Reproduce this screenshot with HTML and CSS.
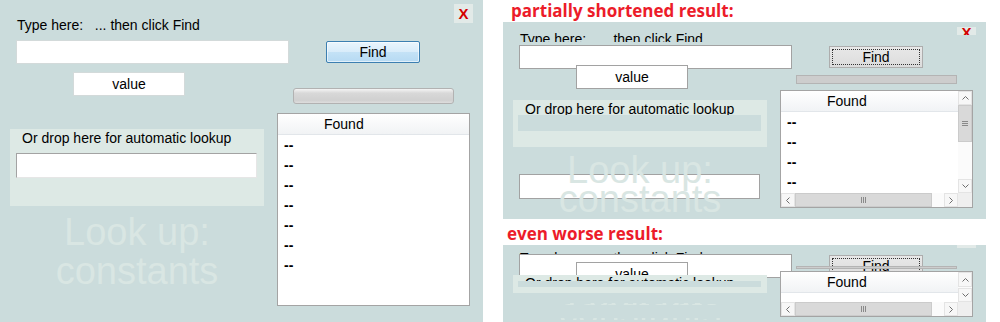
FILE: index.html
```html
<!DOCTYPE html>
<html>
<head>
<meta charset="utf-8">
<title>Look up: constants</title>
<link rel="stylesheet" href="styles.css">
</head>
<body>
<div class="page">

	<!-- normal layout -->
	<div class="panel full">
		<div class="col-left">
			<div class="caption">Type here:&nbsp;&nbsp; ... then click Find</div>
			<div class="field query"></div>
			<div class="field value">value</div>
			<div class="drop">
				<div class="drop-label">Or drop here for automatic lookup</div>
				<div class="drop-band"></div>
				<div class="field drop-field"></div>
			</div>
			<div class="ghost">Look up:<br>constants</div>
		</div>
		<div class="col-right">
			<div class="close">X</div>
			<div class="btn">Find</div>
			<div class="progress"></div>
			<div class="list">
				<div class="list-body">
					<div class="list-head">Found</div>
					<div class="row">--</div>
					<div class="row">--</div>
					<div class="row">--</div>
					<div class="row">--</div>
					<div class="row">--</div>
					<div class="row">--</div>
					<div class="row">--</div>
				</div>
			</div>
		</div>
	</div>

	<div class="results">
		<h2>partially shortened result:</h2>
		<div class="panel broken short">
			<div class="col-left">
				<div class="caption">Type here:&nbsp;&nbsp; ... then click Find</div>
				<div class="field query"></div>
				<div class="field value">value</div>
				<div class="drop">
					<div class="drop-label">Or drop here for automatic lookup</div>
					<div class="drop-band"></div>
					<div class="field drop-field"></div>
				</div>
				<div class="ghost">Look up:<br>constants</div>
			</div>
			<div class="col-right">
				<div class="close">X</div>
				<div class="btn">Find</div>
				<div class="progress"></div>
				<div class="list scroll">
					<div class="list-body">
						<div class="list-head">Found</div>
						<div class="row">--</div>
						<div class="row">--</div>
						<div class="row">--</div>
						<div class="row">--</div>
						<div class="row">--</div>
						<div class="row">--</div>
						<div class="row">--</div>
					</div>
					<div class="vscroll">
						<div class="sb-btn"><svg width="7" height="4"><polyline points="0.5,3.5 3.5,0.5 6.5,3.5" fill="none" stroke="#6d6d6d"/></svg></div>
						<div class="vthumb"><svg width="6" height="5"><path d="M0 0.5H6M0 2.5H6M0 4.5H6" stroke="#8a8a8a"/></svg></div>
						<div class="vtrack"></div>
						<div class="sb-btn"><svg width="7" height="4"><polyline points="0.5,0.5 3.5,3.5 6.5,0.5" fill="none" stroke="#6d6d6d"/></svg></div>
					</div>
					<div class="hscroll">
						<div class="sb-btn"><svg width="4" height="7"><polyline points="3.5,0.5 0.5,3.5 3.5,6.5" fill="none" stroke="#6d6d6d"/></svg></div>
						<div class="hthumb"><svg width="5" height="6"><path d="M0.5 0V6M2.5 0V6M4.5 0V6" stroke="#8a8a8a"/></svg></div>
						<div class="htrack"></div>
						<div class="sb-btn"><svg width="4" height="7"><polyline points="0.5,0.5 3.5,3.5 0.5,6.5" fill="none" stroke="#6d6d6d"/></svg></div>
					</div>
					<div class="corner"></div>
				</div>
			</div>
		</div>

		<h2 class="second">even worse result:</h2>
		<div class="panel broken worse">
			<div class="col-left">
				<div class="caption">Type here:&nbsp;&nbsp; ... then click Find</div>
				<div class="field query"></div>
				<div class="field value">value</div>
				<div class="drop">
					<div class="drop-label">Or drop here for automatic lookup</div>
					<div class="drop-band"></div>
					<div class="field drop-field"></div>
				</div>
				<div class="ghost">Look up:<br>constants</div>
			</div>
			<div class="col-right">
				<div class="close">X</div>
				<div class="btn">Find</div>
				<div class="progress"></div>
				<div class="list scroll">
					<div class="list-body">
						<div class="list-head">Found</div>
					</div>
					<div class="vscroll">
						<div class="sb-btn up"><svg width="7" height="4"><polyline points="0.5,3.5 3.5,0.5 6.5,3.5" fill="none" stroke="#6d6d6d"/></svg></div>
						<div class="vtrack"></div>
						<div class="sb-btn"><svg width="7" height="4"><polyline points="0.5,0.5 3.5,3.5 6.5,0.5" fill="none" stroke="#6d6d6d"/></svg></div>
					</div>
					<div class="hscroll">
						<div class="sb-btn"><svg width="4" height="7"><polyline points="3.5,0.5 0.5,3.5 3.5,6.5" fill="none" stroke="#6d6d6d"/></svg></div>
						<div class="hthumb"><svg width="5" height="6"><path d="M0.5 0V6M2.5 0V6M4.5 0V6" stroke="#8a8a8a"/></svg></div>
						<div class="htrack"></div>
						<div class="sb-btn"><svg width="4" height="7"><polyline points="0.5,0.5 3.5,3.5 0.5,6.5" fill="none" stroke="#6d6d6d"/></svg></div>
					</div>
					<div class="corner"></div>
				</div>
			</div>
		</div>
	</div>

</div>
</body>
</html>
```

FILE: styles.css
```css
body {
	margin: 0;
	background: #fff;
	font-family: "Liberation Sans", Arial, sans-serif;
	font-size: 14px;
	color: #000;
	overflow: hidden;
}

.page {
	display: flex;
	gap: 20px;
	height: 322px;
}

.panel {
	display: flex;
	width: 483px;
	background: #cbdcdc;
	overflow: hidden;
	flex: none;
}

.panel.full {
	height: 322px;
}

.results {
	width: 483px;
	display: flex;
	flex-direction: column;
}

.results h2 {
	margin: 0;
	height: 22px;
	padding-left: 8px;
	font-family: "Open Sans", sans-serif;
	font-weight: 700;
	font-size: 17px;
	line-height: 22px;
	color: #ec1c2a;
	white-space: nowrap;
}

.results h2.second {
	box-sizing: border-box;
	height: 26px;
	padding: 4px 0 0 4px;
}

/* columns */
.col-left {
	width: 277px;
	flex: none;
}

.col-right {
	flex: 1;
}

.col-left > *,
.col-right > *,
.drop > * {
	position: relative;
}

.caption {
	margin-top: 17px;
	padding-left: 17px;
	line-height: 16px;
	white-space: nowrap;
}

.field {
	box-sizing: border-box;
	background: #fff;
	border: 1px solid #d3dada;
}

.query {
	margin: 7px 0 0 16px;
	width: 273px;
	height: 24px;
}

.value {
	margin: 8px 0 0 73px;
	width: 112px;
	height: 24px;
	line-height: 22px;
	text-align: center;
}

.drop {
	box-sizing: border-box;
	margin: 33px 0 0 10px;
	width: 254px;
	height: 77px;
	padding-top: 1px;
	background: #dde9e5;
}

.drop-label {
	padding-left: 12px;
	line-height: 16px;
	white-space: nowrap;
}

.drop-band {
	display: none;
	margin-left: 5px;
	width: 243px;
	background: #cbdcdc;
}

.drop-field {
	margin: 7px 0 0 6px;
	width: 241px;
	height: 25px;
	border-color: #a3a3a3 #e6e6e6 #e6e6e6 #a3a3a3;
}

.ghost {
	margin: 7px 0 0 10px;
	width: 254px;
	font-size: 38px;
	line-height: 39px;
	text-align: center;
	color: #d9e6e3;
	white-space: nowrap;
}

.close {
	margin: 4px 0 0 177px;
	width: 19px;
	height: 19px;
	overflow: hidden;
	background: #e2eae8;
	text-align: center;
	font-weight: 700;
	font-size: 15px;
	line-height: 19px;
	color: #d40000;
}

.btn {
	box-sizing: border-box;
	margin: 18px 0 0 49px;
	width: 94px;
	height: 22px;
	border: 1px solid #3c7fb1;
	border-radius: 2px;
	background: linear-gradient(#eaf5fd, #d8ecfa 50%, #c4e2f6 51%, #b6daf3);
	box-shadow: inset 0 0 0 1px rgba(255, 255, 255, 0.6);
	text-align: center;
	line-height: 20px;
}

.progress {
	box-sizing: border-box;
	margin: 25px 0 0 16px;
	width: 161px;
	height: 16px;
	border: 1px solid #b2b2b2;
	border-radius: 3px;
	background: linear-gradient(#f4f4f4, #d8d8d8 30%, #d0d0d0 80%, #dedede);
}

/* found list */
.list {
	box-sizing: border-box;
	margin-top: 9px;
	width: 193px;
	height: 193px;
	border: 1px solid #a4a4a4;
	background: #fff;
	display: grid;
	grid-template-columns: minmax(0, 1fr);
	overflow: hidden;
}

.list-body {
	overflow: hidden;
	min-height: 0;
}

.list-head {
	height: 20px;
	padding-left: 46px;
	line-height: 20px;
	background: linear-gradient(#fff, #f1f3f5);
	border-bottom: 1px solid #e2e6ea;
}

.row {
	height: 20px;
	padding-left: 6px;
	line-height: 20px;
	font-weight: 700;
}

.list.scroll {
	grid-template-columns: minmax(0, 1fr) 14px;
	grid-template-rows: minmax(0, 1fr) 14px;
}

.vscroll {
	display: flex;
	flex-direction: column;
	min-height: 0;
	background: #fbfbfb;
}

.hscroll {
	display: flex;
	background: #fbfbfb;
}

.sb-btn {
	flex: none;
	box-sizing: border-box;
	width: 14px;
	height: 14px;
	display: flex;
	align-items: center;
	justify-content: center;
	background: #f7f7f7;
	border: 1px solid #e4e4e4;
}

.vthumb,
.hthumb {
	flex: none;
	box-sizing: border-box;
	display: flex;
	align-items: center;
	justify-content: center;
	background: #d9d9d9;
	border: 1px solid #cbcbcb;
}

.vthumb {
	height: 37px;
}

.hthumb {
	width: 137px;
}

.vtrack,
.htrack {
	flex: 1;
}

.corner {
	background: #efefef;
}

/* broken layouts */
.broken .field {
	border-color: #a2a2a2;
}

.broken .btn {
	border: 1px solid #adadad;
	border-radius: 0;
	background: linear-gradient(#e8e8e8, #dcdcdc);
	box-shadow: none;
}

.broken .btn::after {
	content: "";
	position: absolute;
	left: 2px;
	top: 2px;
	right: 2px;
	bottom: 2px;
	border: 1px dotted #333;
}

.broken .progress {
	border-radius: 0;
	border-color: #b4b4b4;
	background: #cdcdcd;
}

.short {
	height: 197px;
}

.short .caption { margin-top: 9px; height: 11px; overflow: hidden; }
.short .query { margin-top: 3px; }
.short .value { margin-top: -4px; }
.short .drop { margin-top: 11px; height: 47px; }
.short .drop-band { display: block; margin-top: -2px; height: 16px; }
.short .drop-field { margin-top: 43px; }
.short .ghost { margin-top: 9px; line-height: 29px; }
.short .close { margin-top: 5px; height: 8px; line-height: 12px; }
.short .btn { margin-top: 11px; }
.short .progress { margin-top: 7px; height: 9px; }
.short .list { margin-top: 6px; height: 118px; }

.worse {
	height: 77px;
}

.worse .caption { margin-top: 5px; }
.worse .query { margin-top: -12px; }
.worse .value { margin-top: -16px; }
.worse .drop { margin-top: -11px; height: 18px; padding-top: 0; }
.worse .drop-label { height: 6px; overflow: hidden; }
.worse .drop-band { display: block; height: 6px; }
.worse .drop-field { margin-top: 40px; }
.worse .ghost {
	margin-top: -5px;
	line-height: 16px;
	-webkit-mask-image: linear-gradient(transparent 15px, #000 15px, #000 17px, transparent 17px, transparent 30px, #000 30px, #000 34px, transparent 34px);
	mask-image: linear-gradient(transparent 15px, #000 15px, #000 17px, transparent 17px, transparent 30px, #000 30px, #000 34px, transparent 34px);
}
.worse .close { margin-top: 0; height: 3px; color: transparent; }
.worse .btn { margin-top: 7px; }
.worse .progress { margin-top: -11px; height: 3px; }
.worse .list { margin-top: 2px; height: 46px; }
.worse .sb-btn.up { height: 15px; }
```
